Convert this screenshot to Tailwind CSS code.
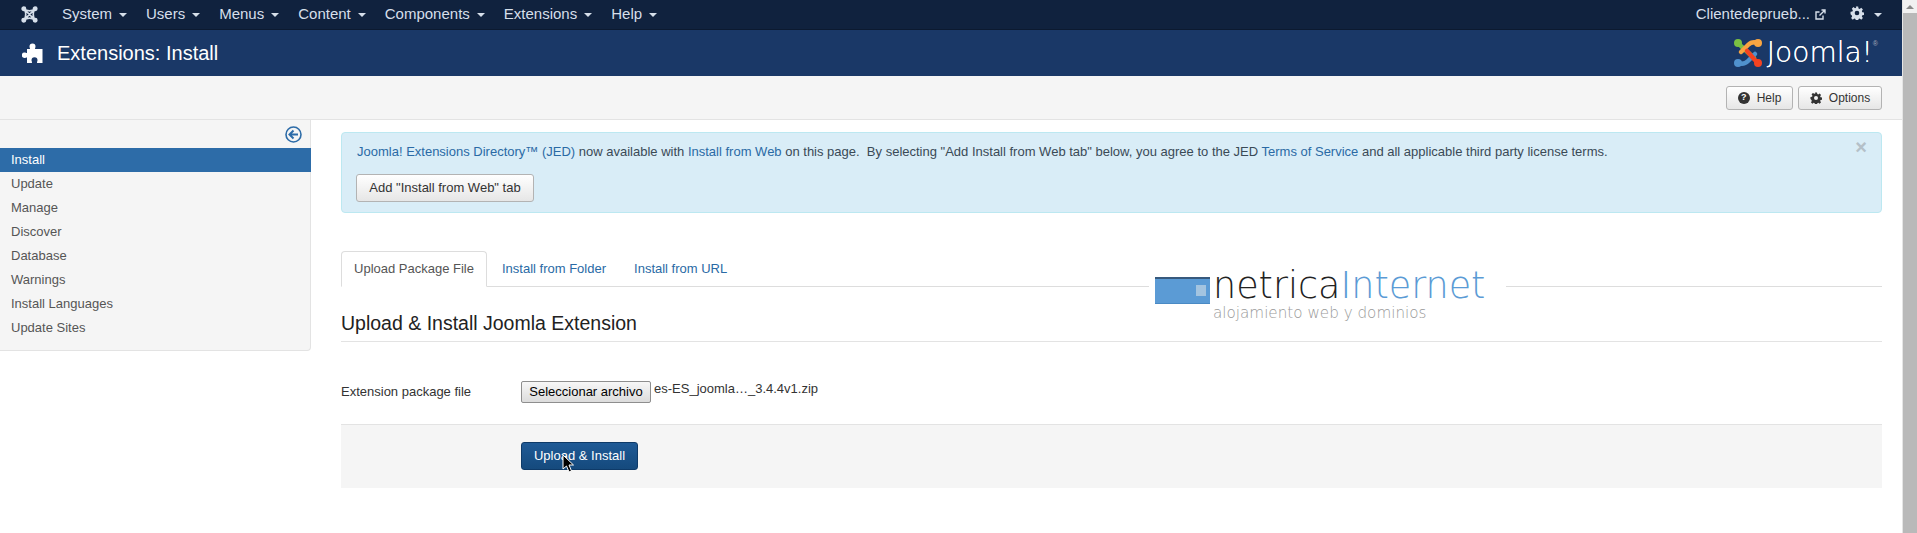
<!DOCTYPE html>
<html lang="en">
<head>
    <meta charset="UTF-8">
    <title>Extensions: Install</title>
    <script src="https://cdn.jsdelivr.net/npm/@tailwindcss/browser@4"></script>
</head>
<body class="flex h-[533px] overflow-hidden bg-white font-['Liberation_Sans',Arial,sans-serif] text-[13px] text-[#333]">
    <div class="flex-1 min-w-0">
        <!-- Top nav -->
        <nav class="flex h-[30px] items-center justify-between bg-[#10223e] border-b border-[#0c1a30] text-[15px] text-[#d6dfea]">
            <div class="flex items-center">
                <svg class="ml-[21px] mr-[24px] w-[17px] h-[17px]" viewBox="0 0 30 30" fill="none" stroke="#d6dfea" stroke-width="2.800" stroke-linecap="round">
                    <path d="M5 5 L25 25 M25 5 L5 25 M5 5 Q15 12 25 5 M5 25 Q15 18 25 25 M5 5 Q12 15 5 25 M25 5 Q18 15 25 25"/>
                    <circle cx="5" cy="5" r="3" fill="#d6dfea"/>
                    <circle cx="25" cy="5" r="3" fill="#d6dfea"/>
                    <circle cx="5" cy="25" r="3" fill="#d6dfea"/>
                    <circle cx="25" cy="25" r="3" fill="#d6dfea"/>
                </svg>
                <span class="flex items-center gap-[7px] mr-[19px]">System <span class="w-0 h-0 border-x-4 border-x-transparent border-t-4 border-t-[#d6dfea]"></span></span>
                <span class="flex items-center gap-[7px] mr-[19px]">Users <span class="w-0 h-0 border-x-4 border-x-transparent border-t-4 border-t-[#d6dfea]"></span></span>
                <span class="flex items-center gap-[7px] mr-[19px]">Menus <span class="w-0 h-0 border-x-4 border-x-transparent border-t-4 border-t-[#d6dfea]"></span></span>
                <span class="flex items-center gap-[7px] mr-[19px]">Content <span class="w-0 h-0 border-x-4 border-x-transparent border-t-4 border-t-[#d6dfea]"></span></span>
                <span class="flex items-center gap-[7px] mr-[19px]">Components <span class="w-0 h-0 border-x-4 border-x-transparent border-t-4 border-t-[#d6dfea]"></span></span>
                <span class="flex items-center gap-[7px] mr-[19px]">Extensions <span class="w-0 h-0 border-x-4 border-x-transparent border-t-4 border-t-[#d6dfea]"></span></span>
                <span class="flex items-center gap-[7px]">Help <span class="w-0 h-0 border-x-4 border-x-transparent border-t-4 border-t-[#d6dfea]"></span></span>
            </div>
            <div class="flex items-center pr-[20px]">
                <span>Clientedeprueb...</span>
                <svg class="ml-[5px] w-[11px] h-[11px]" viewBox="0 0 11 11" fill="none" stroke="#d6dfea" stroke-width="1.4">
                    <path d="M8 6.500 V10 H1 V3 H4.500 M4.500 6.500 L10 1 M6.500 1 H10 V4.500"/>
                </svg>
                <svg class="ml-[24px] w-[14px] h-[14px] -mt-[3px]" viewBox="0 0 24 24" fill="#d6dfea">
                    <path fill-rule="evenodd" d="M10 1h4l.6 3.200 2 .8 2.700-1.800 2.800 2.800-1.800 2.700.8 2 3.200.6v4l-3.200.6-.8 2 1.800 2.700-2.800 2.800-2.700-1.800-2 .8-.6 3.200h-4l-.6-3.200-2-.8-2.700 1.800-2.800-2.800 1.800-2.700-.8-2L.9 14v-4l3.200-.6.8-2-1.800-2.700L5.900 1.900l2.700 1.800 2-.8zM12 8a4 4 0 1 0 0 8 4 4 0 0 0 0-8z"/>
                </svg>
                <span class="ml-[10px] w-0 h-0 border-x-4 border-x-transparent border-t-4 border-t-[#d6dfea]"></span>
            </div>
        </nav>

        <!-- Title bar -->
        <header class="flex h-[46px] items-center justify-between bg-[#1a3867] pl-[22px] pr-[24px]">
            <div class="flex items-center text-white">
                <svg class="w-[21px] h-[21px]" viewBox="0 0 21 21" fill="#fff">
                    <path d="M10.500 0.500 a3 3 0 0 1 3 3 c0 1-.5 1.500-.5 2.500 H20.500 V20 H15 c0-1.500 .5-2 .5-2.700 a3 3 0 0 0-6 0 c0 .7.500 1.200.500 2.700 H5 V14.500 c-1 0-1.500.5-2.500.5 a2.700 2.700 0 0 1 0-5.400 c1 0 1.500.5 2.500.5 V6 H8 c0-1-.5-1.500-.5-2.500 a3 3 0 0 1 3-3 z"/>
                </svg>
                <h1 class="ml-[14px] text-[20px] leading-none">Extensions: Install</h1>
            </div>
            <div class="flex items-center">
                <svg class="w-[30px] h-[30px]" viewBox="0 0 30 30" fill="none" stroke-width="4.500" stroke-linecap="round" stroke-linejoin="round">
                    <path stroke="#7ac143" d="M5 5 L9 9 L21 20"/>
                    <circle cx="5" cy="5" r="4" fill="#7ac143" stroke="none"/>
                    <path stroke="#f9a541" d="M25 5 Q19 3 15 7 L8 14"/>
                    <circle cx="25" cy="5" r="4" fill="#f9a541" stroke="none"/>
                    <path stroke="#5091cd" d="M5 25 Q11 27 15 23 L22 16"/>
                    <circle cx="5" cy="25" r="4" fill="#5091cd" stroke="none"/>
                    <path stroke="#f44321" d="M25 25 L21 21 L14 13"/>
                    <circle cx="25" cy="25" r="4" fill="#f44321" stroke="none"/>
                </svg>
                <span class="ml-[4px] font-['DejaVu_Sans',sans-serif] font-extralight text-[28px] leading-none text-white [text-shadow:0_0_0.5px_#fff]">Joomla!</span>
                <sup class="text-[7px] text-[#aab] -mt-3">®</sup>
            </div>
        </header>

        <!-- Toolbar -->
        <div class="flex h-[44px] items-center justify-end gap-[5px] bg-[#f5f5f5] border-b border-[#e3e3e3] pr-[20px]">
            <button class="flex h-[24px] w-[67px] items-center justify-center gap-[7px] rounded-[3px] border border-[#b3b3b3] bg-gradient-to-b from-white to-[#e6e6e6] text-[12px]">
                <span class="flex h-[12px] w-[12px] items-center justify-center rounded-full bg-[#333] text-[9px] font-bold leading-none text-white">?</span>Help
            </button>
            <button class="flex h-[24px] w-[84px] items-center justify-center gap-[7px] rounded-[3px] border border-[#b3b3b3] bg-gradient-to-b from-white to-[#e6e6e6] text-[12px]">
                <svg class="w-[12px] h-[12px]" viewBox="0 0 24 24" fill="#333">
                    <path fill-rule="evenodd" d="M10 1h4l.6 3.200 2 .8 2.700-1.800 2.800 2.800-1.800 2.700.8 2 3.200.6v4l-3.200.6-.8 2 1.800 2.700-2.800 2.800-2.700-1.800-2 .8-.6 3.200h-4l-.6-3.200-2-.8-2.700 1.800-2.800-2.800 1.800-2.700-.8-2L.9 14v-4l3.200-.6.8-2-1.800-2.700L5.900 1.900l2.700 1.800 2-.8zM12 8a4 4 0 1 0 0 8 4 4 0 0 0 0-8z"/>
                </svg>Options
            </button>
        </div>

        <div class="flex">
            <!-- Sidebar -->
            <aside class="w-[311px] h-[231px] shrink-0 rounded-br-[4px] border-r border-b border-[#e3e3e3] bg-[#f5f5f5] text-[#555]">
                <div class="flex h-[28px] items-center justify-end pr-[8px]">
                    <svg class="w-[17px] h-[17px]" viewBox="0 0 17 17" fill="none" stroke="#2d6ca8" stroke-width="1.600">
                        <circle cx="8.500" cy="8.500" r="7.500"/>
                        <path stroke-width="2" d="M13 8.500 H5 M8.500 4.500 L4.500 8.500 L8.500 12.500"/>
                    </svg>
                </div>
                <ul class="leading-[24px]">
                    <li class="-mr-px bg-[#2d6ca8] pl-[11px] text-white">Install</li>
                    <li class="pl-[11px]">Update</li>
                    <li class="pl-[11px]">Manage</li>
                    <li class="pl-[11px]">Discover</li>
                    <li class="pl-[11px]">Database</li>
                    <li class="pl-[11px]">Warnings</li>
                    <li class="pl-[11px]">Install Languages</li>
                    <li class="pl-[11px]">Update Sites</li>
                </ul>
            </aside>

            <!-- Main column -->
            <main class="flex-1 min-w-0 pl-[30px] pr-[20px] pt-[12px]">
                <div class="relative h-[81px] rounded-[4px] border border-[#bce8f1] bg-[#d9edf7] pl-[14px] pt-[10px]">
                    <p class="pl-[1px] leading-[18px] text-[#3a4a56]"><a class="text-[#2a6aa5]">Joomla! Extensions Directory™ (JED)</a> now available with <a class="text-[#2a6aa5]">Install from Web</a> on this page.&nbsp; By selecting "Add Install from Web tab" below, you agree to the JED <a class="text-[#2a6aa5]">Terms of Service</a> and all applicable third party license terms.</p>
                    <span class="absolute right-[14px] top-[4px] text-[20px] font-bold leading-[20px] text-[#b4c0c8]">×</span>
                    <button class="mt-[13px] h-[28px] w-[178px] rounded-[3px] border border-[#b3b3b3] bg-gradient-to-b from-white to-[#e6e6e6] text-[13px] text-[#333]">Add "Install from Web" tab</button>
                </div>

                <!-- Tabs -->
                <div class="relative mt-[38px] flex h-[36px] border-b border-[#ddd]">
                    <span class="flex h-[36px] w-[146px] items-center justify-center rounded-t-[4px] border border-[#ddd] border-b-white bg-white text-[#555]">Upload Package File</span>
                    <span class="flex h-[36px] items-center pl-[15px] pr-[14px] text-[#2a6aa5]">Install from Folder</span>
                    <span class="flex h-[36px] items-center px-[14px] text-[#2a6aa5]">Install from URL</span>
                    <!-- netrica watermark -->
                    <div class="absolute left-[808px] top-[10px] flex h-[60px] w-[357px] bg-white pl-[6px]">
                        <div class="relative mt-[16px] h-[27px] w-[55px] shrink-0 border-t-2 border-t-[#37597d] border-b border-b-[#4a8ac4] bg-[#5b9bd5]">
                            <div class="absolute left-[41px] top-[6px] h-[11px] w-[10px] bg-[#a3c4e0]"></div>
                        </div>
                        <div class="ml-[3px] font-['DejaVu_Sans',sans-serif] font-extralight">
                            <div class="mt-[4px] text-[36.500px] leading-[41px] text-[#222]">netrica<span class="text-[#5b9bd5]">Internet</span></div>
                            <div class="text-[15.200px] leading-[14px] text-[#999]">alojamiento web y dominios</div>
                        </div>
                    </div>
                </div>

                <h2 class="mt-[23px] border-b border-[#e3e3e3] pb-[5px] text-[19.5px] leading-[26px] text-[#222]">Upload &amp; Install Joomla Extension</h2>

                <!-- File row -->
                <div class="mt-[39px] flex h-[22px] items-center">
                    <label class="w-[180px]">Extension package file</label>
                    <button class="h-[22px] w-[130px] rounded-[2px] border border-[#8e8e8e] bg-gradient-to-b from-[#f7f7f7] to-[#dcdcdc] text-[13px] text-black">Seleccionar archivo</button>
                    <span class="ml-[3px] -mt-[6px]">es-ES_joomla…_3.4.4v1.zip</span>
                </div>

                <div class="mt-[21px] h-[64px] border-t border-[#e3e3e3] bg-[#f5f5f5] pl-[180px] pt-[17px]">
                    <button class="relative h-[28px] w-[117px] rounded-[3px] border border-[#0e3a68] bg-gradient-to-b from-[#1f5a96] to-[#154a7d] text-[13px] text-white">
                        Upload &amp; Install
                        <svg class="absolute left-[40px] top-[11px] w-[13px] h-[20px]" viewBox="0 0 13 20">
                            <path d="M1 1 V15 L4.500 12 L7 18 L9.500 17 L7 11 H11.500 Z" fill="#000" stroke="#fff" stroke-width="1"/>
                        </svg>
                    </button>
                </div>
            </main>
        </div>
    </div>

    <!-- Browser scrollbar -->
    <div class="flex w-[15px] shrink-0 flex-col items-center border-l border-[#e5e5e5] bg-[#f1f1f1]">
        <span class="mt-[5px] w-0 h-0 border-x-[4px] border-x-transparent border-b-[4px] border-b-[#8a8a8a]"></span>
        <div class="mt-[4px] w-full flex-1 bg-[#b9b9b9]"></div>
    </div>
</body>
</html>
